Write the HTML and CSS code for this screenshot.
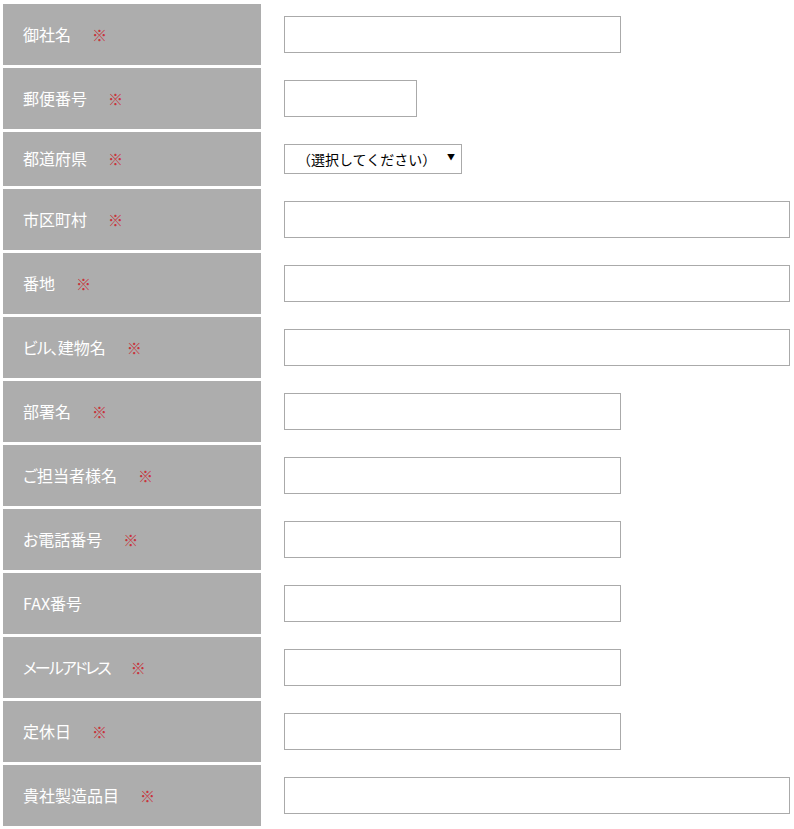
FILE: index.html
```html
<!DOCTYPE html>
<html lang="ja">
<head>
    <meta charset="UTF-8">
    <title>お問い合わせフォーム</title>
    <link rel="stylesheet" href="styles.css">
</head>
<body>
    <form class="contact-form" action="#" method="post">
        <table class="form-table">
            <tr>
                <th>御社名<span class="req">※</span></th>
                <td><input type="text" class="w-mid" name="company"></td>
            </tr>
            <tr>
                <th>郵便番号<span class="req">※</span></th>
                <td><input type="text" class="w-small" name="zip"></td>
            </tr>
            <tr>
                <th>都道府県<span class="req">※</span></th>
                <td>
                    <div class="select-wrap">
                        <select name="pref">
                            <option>（選択してください）</option>
                        </select>
                        <span class="select-arrow">▼</span>
                    </div>
                </td>
            </tr>
            <tr>
                <th>市区町村<span class="req">※</span></th>
                <td><input type="text" class="w-full" name="city"></td>
            </tr>
            <tr>
                <th>番地<span class="req">※</span></th>
                <td><input type="text" class="w-full" name="addr"></td>
            </tr>
            <tr>
                <th><span class="tight">ビル、</span>建物名<span class="req">※</span></th>
                <td><input type="text" class="w-full" name="building"></td>
            </tr>
            <tr>
                <th>部署名<span class="req">※</span></th>
                <td><input type="text" class="w-mid" name="dept"></td>
            </tr>
            <tr>
                <th>ご担当者様名<span class="req">※</span></th>
                <td><input type="text" class="w-mid" name="person"></td>
            </tr>
            <tr>
                <th>お電話番号<span class="req">※</span></th>
                <td><input type="text" class="w-mid" name="tel"></td>
            </tr>
            <tr>
                <th>FAX番号</th>
                <td><input type="text" class="w-mid" name="fax"></td>
            </tr>
            <tr>
                <th><span class="tighter">メールアドレス</span><span class="req">※</span></th>
                <td><input type="text" class="w-mid" name="email"></td>
            </tr>
            <tr>
                <th>定休日<span class="req">※</span></th>
                <td><input type="text" class="w-mid" name="holiday"></td>
            </tr>
            <tr>
                <th>貴社製造品目<span class="req">※</span></th>
                <td><input type="text" class="w-full" name="products"></td>
            </tr>
        </table>
    </form>
</body>
</html>
```

FILE: styles.css
```css
body { margin: 0; background: #fff; font-family: "Noto Sans CJK JP", "Noto Sans", sans-serif; }
.form-table { width: 794px; border-collapse: separate; border-spacing: 3px; margin-top: 1px; }
.form-table th {
    width: 238px;
    padding: 0 0 2px 20px;
    background: #adadad;
    color: #fff;
    font-size: 16px;
    font-weight: normal;
    text-align: left;
    vertical-align: middle;
    white-space: nowrap;
    font-feature-settings: "palt";
}
.form-table td { padding: 12px 0 12px 20px; vertical-align: middle; }
.tight { letter-spacing: -1px; }
.tighter { letter-spacing: -2px; }
.req { color: #c8333b; font-size: 15px; margin-left: 21px; font-feature-settings: normal; letter-spacing: 0; }
input[type="text"] {
    display: block;
    box-sizing: border-box;
    height: 37px;
    border: 1px solid #aaa;
    border-radius: 0;
    padding: 4px 8px;
    font-size: 14px;
    background: #fff;
}
.w-small { width: 133px; }
.w-mid { width: 337px; }
.w-full { width: 506px; }
.select-wrap { position: relative; width: 178px; }
select {
    display: block;
    box-sizing: border-box;
    width: 178px;
    height: 30px;
    border: 1px solid #aaa;
    border-radius: 0;
    background: #fff;
    font-family: "Noto Sans CJK JP", sans-serif;
    font-size: 14px;
    color: #000;
    padding: 0 20px 0 12px;
    appearance: none;
    -webkit-appearance: none;
}
.select-arrow {
    position: absolute;
    right: 7px;
    top: 9px;
    font-size: 8px;
    line-height: 1;
    color: #000;
    pointer-events: none;
}
```
